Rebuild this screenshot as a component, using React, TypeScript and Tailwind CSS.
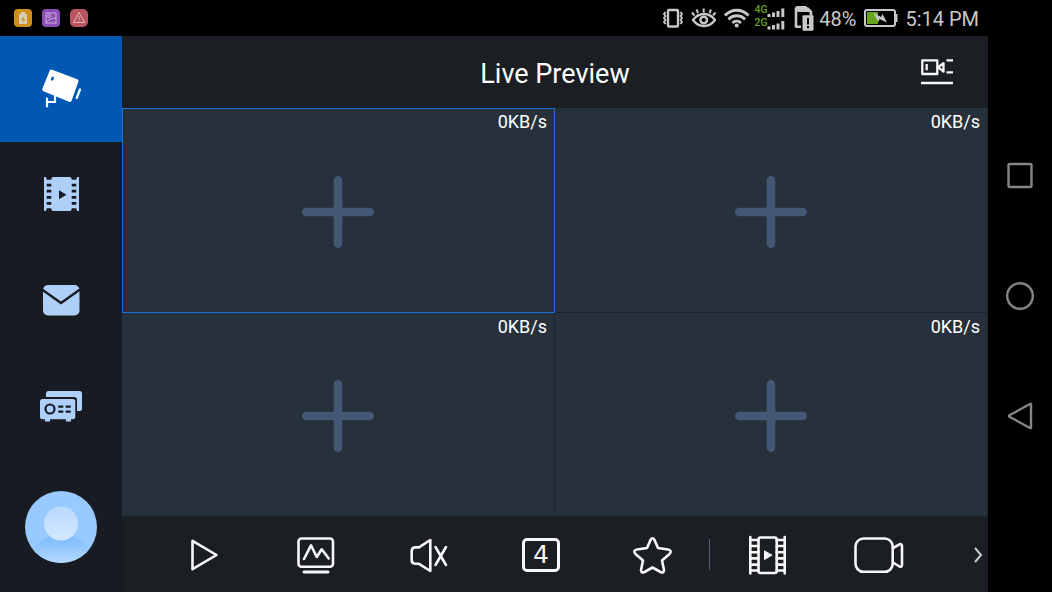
import React from "react";

type IconProps = { children: React.ReactNode };

function Line({ children }: IconProps) {
  return (
    <svg width="48" height="48" viewBox="0 0 48 48" fill="none" stroke="#f7f7f8" strokeWidth="2.6" strokeLinecap="round" strokeLinejoin="round" className="overflow-visible" aria-hidden="true">
      {children}
    </svg>
  );
}

function Solid({ children }: IconProps) {
  return (
    <svg width="48" height="48" viewBox="0 0 48 48" fill="#aecff7" aria-hidden="true">
      {children}
    </svg>
  );
}

function StatusBar() {
  return (
    <div className="flex h-9 shrink-0 items-center justify-between bg-black pl-3.5 pr-[9px]">
      <div className="flex gap-2.5">
        <svg width="18" height="18" viewBox="0 0 18 18" aria-hidden="true">
          <rect width="18" height="18" rx="4" fill="#cf9019" />
          <path d="M7 3h4v2h2v10H5V5h2z" fill="#d8cdb8" />
          <path d="M10 7l-3 3.500h2L8.500 14l3-4H9.500z" fill="#cf9019" />
        </svg>
        <svg width="18" height="18" viewBox="0 0 18 18" fill="none" stroke="#c9aed8" aria-hidden="true">
          <rect width="18" height="18" rx="4" fill="#8a4cb5" stroke="none" />
          <rect x="4" y="4" width="10" height="10" />
          <circle cx="7" cy="7" r="1.500" />
          <path d="M4 14q3-5 10-5" />
        </svg>
        <svg width="18" height="18" viewBox="0 0 18 18" fill="none" stroke="#dcb5b9" aria-hidden="true">
          <rect width="18" height="18" rx="5" fill="#b95460" stroke="none" />
          <path d="M9 3.500L14.700 13.500H3.300zM9 7v3.500M9 11.500v1" strokeLinejoin="round" />
        </svg>
      </div>
      <div className="flex items-center text-[#c8c8c8]">
        <svg width="153" height="30" viewBox="663 3 153 30" fill="none" stroke="#c8c8c8" strokeWidth="2.400" strokeLinejoin="round" aria-hidden="true">
          <rect x="669" y="10" width="10" height="16.500" rx="1" />
          <path d="M666.500 12l-1.500 2 1.500 2-1.500 2 1.500 2-1.500 2 1.500 2M681.500 12l1.500 2-1.500 2 1.500 2-1.500 2 1.500 2-1.500 2" strokeWidth="2" />
          <path d="M694 20c6-8 16-8 22 0c-6 8-16 8-22 0z" />
          <circle cx="704.700" cy="20" r="3.300" />
          <path d="M704.700 8.500v4M697.500 9.500l1.500 3.500M712 9.500L710.500 13M693 12.500l2.500 3M716.500 12.500l-2.500 3" strokeWidth="2" />
          <path d="M726 15.500c6.500-7 17-7 23.500 0M729.500 19.500c4.500-5 12-5 16.500 0M733.500 23c2.500-2.500 6-2.500 8.500 0" strokeWidth="2.800" />
          <circle cx="737.700" cy="25.500" r="2" fill="#c8c8c8" stroke="none" />
          <path d="M770 17v-3M774.500 17v-4.500M779 17v-6M783.800 17V8.500M770 29.500v-3M774.500 29.500V25M779 29.500v-6M783.800 29.500V21" strokeWidth="3" />
          <path d="M802 26.700h-5V11M808 8l4 4v5" strokeWidth="2.600" />
          <path d="M795.700 8l2-2h9.300l6 6h-13l-4.300-1z" fill="#c8c8c8" stroke="none" />
          <rect x="803.500" y="15.300" width="11" height="15.500" rx="1" fill="#c8c8c8" stroke="none" />
          <path d="M809 18v6.500M809 26v2.200" stroke="#000" strokeWidth="2" />
          <g fill="#67a51c" stroke="none" fontFamily="Roboto, sans-serif" fontSize="10.500" fontWeight="500">
            <text x="755.500" y="12.500">4G</text>
            <text x="755.500" y="26">2G</text>
          </g>
        </svg>
        <span className="ml-1 pt-0.5 font-[Roboto,sans-serif] text-xl">48%</span>
        <svg className="ml-2" width="34" height="18" viewBox="0 0 34 18" aria-hidden="true">
          <rect x="1" y="1" width="30" height="16" rx="2" fill="none" stroke="#c8c8c8" strokeWidth="2" />
          <rect x="3" y="3" width="11" height="12" fill="#67a51c" />
          <path d="M32 5h1.500v8H32z" fill="#c8c8c8" />
          <path d="M9 3.500l8 4.500 1.500-3L23 13.500 15.500 10l-1 3z" fill="#c8c8c8" />
        </svg>
        <span className="ml-[7px] pt-0.5 font-[Roboto,sans-serif] text-xl">5:14 PM</span>
      </div>
    </div>
  );
}

function Sidebar() {
  const item = "flex h-[106px] w-full items-center justify-center";
  return (
    <nav className="flex w-[122px] shrink-0 flex-col items-center bg-[#181b22]" aria-label="Sections">
      <button className={item + " bg-[#0058b3]"} aria-label="Live preview">
        <Solid>
          <path d="M14.500 6.500L39.500 16 32.700 35 7.200 24.500z" fill="#fff" stroke="#fff" strokeWidth="4" strokeLinejoin="round" />
          <path d="M16 12l-1.200 3.300" stroke="#0058b3" strokeWidth="2.400" />
          <path d="M10 33.500v8M10 37h8V31M43 24.500L39.700 33" fill="none" stroke="#fff" strokeWidth="2.200" strokeLinecap="round" />
        </Solid>
      </button>
      <button className={item} aria-label="Playback">
        <Solid>
          <path d="M7 6h2v1.500h5.500L15.500 6h18l1 1.500H40V6h2v34h-2v-1.500h-5.500l-1 1.500h-18l-1-1.500H9V40H7z" />
          <path d="M9.700 6h4.600v2.700H9.700zM9.700 12.700h4.600v2.800H9.700zM9.700 18.800h4.600v2.800H9.700zM9.700 24.900h4.600v2.800H9.700zM9.700 31h4.600v2.800H9.700zM9.700 37.300h4.600V40H9.700zM34.700 6h4.600v2.700h-4.600zM34.700 12.700h4.600v2.800h-4.600zM34.700 18.800h4.600v2.800h-4.600zM34.700 24.900h4.600v2.800h-4.600zM34.700 31h4.600v2.800h-4.600zM34.700 37.300h4.600V40h-4.600zM22 19.300l7.500 4.500L22 28.300z" fill="#181b22" />
        </Solid>
      </button>
      <button className={item} aria-label="Messages">
        <Solid>
          <rect x="6" y="8" width="36.500" height="30.500" rx="5" />
          <path d="M5 12.500L24 26l19-13.500" fill="none" stroke="#181b22" strokeWidth="2.300" />
        </Solid>
      </button>
      <button className={item} aria-label="Devices">
        <Solid>
          <rect x="9" y="8" width="36" height="20" rx="2.500" />
          <rect x="1" y="14" width="39" height="26" rx="3" fill="#181b22" />
          <rect x="3" y="16" width="35.300" height="20.300" rx="2.500" />
          <path d="M8 36h5v2.500H8zM29 36h5v2.500h-5z" />
          <circle cx="13" cy="26" r="4.500" fill="none" stroke="#181b22" strokeWidth="2.200" />
          <path d="M21.300 23.700h5M28.700 23.700h5M21.300 28.700h5M28.700 28.700h5" stroke="#181b22" strokeWidth="2.200" />
        </Solid>
      </button>
      <button className="mt-[31px] size-[72px]" aria-label="Profile">
        <svg viewBox="0 0 72 72" aria-hidden="true">
          <defs>
            <linearGradient id="body" x1="0" y1="0" x2="0" y2="1">
              <stop offset="0" stopColor="#77b8fd" />
              <stop offset="1" stopColor="#b4d9ff" />
            </linearGradient>
            <linearGradient id="head" x1="0" y1="0" x2="0" y2="1">
              <stop offset="0" stopColor="#b8daff" />
              <stop offset="1" stopColor="#d3e8ff" />
            </linearGradient>
            <clipPath id="disc"><circle cx="36" cy="36" r="36" /></clipPath>
          </defs>
          <g clipPath="url(#disc)">
            <rect width="72" height="72" fill="#98caff" />
            <path d="M6 60Q20 43 36 43T66 60V72H6z" fill="url(#body)" />
            <circle cx="36" cy="32.500" r="17" fill="url(#head)" />
          </g>
        </svg>
      </button>
    </nav>
  );
}

function Cell({ active }: { active?: boolean }) {
  return (
    <div className={"relative flex border bg-[#27313b] " + (active ? "border-[#1d6fd0]" : "border-l-[#27313b] border-t-[#27313b] border-b-[#1c242b] border-r-[#1c242b]")}>
      <button className="flex flex-1 items-center justify-center pr-px pt-[3px]" aria-label="Add camera">
        <svg width="72" height="72" viewBox="0 0 72 72" stroke="#445876" strokeWidth="8.600" strokeLinecap="round" aria-hidden="true">
          <path d="M36 4.300v63.400M4.300 36h63.400" />
        </svg>
      </button>
      <span className="absolute right-[7px] top-px font-[Roboto,sans-serif] text-lg leading-6 text-white">0KB/s</span>
    </div>
  );
}

function Toolbar() {
  const tool = "flex min-w-0 flex-1 items-center justify-center";
  return (
    <div className="flex h-[75px] shrink-0 items-center bg-[#1b1e23] pl-[26px]">
      <button className={tool} aria-label="Play">
        <Line><path d="M12.500 9.800v28.400L36.500 24z" /></Line>
      </button>
      <button className={tool} aria-label="Stream quality">
        <Line>
          <rect x="6.500" y="7.500" width="34.500" height="28.200" rx="3" />
          <path d="M12 28l7-13.700 5.700 11.700 5-7.700 7 9.200" />
          <path d="M12 41h24" strokeWidth="3" />
        </Line>
      </button>
      <button className={tool} aria-label="Unmute">
        <Line>
          <path d="M25.300 9v31L14 32.800h-4q-3.300-.3-3.300-3.500V20q0-3.300 3.300-3.600h4z" />
          <path d="M30.500 16L41 34M41 16L30.500 34" />
        </Line>
      </button>
      <button className={tool} aria-label="Split into 4 windows">
        <span className="flex h-[34px] w-[38px] items-center justify-center rounded-[5px] border-[3px] border-[#f7f7f8] font-['DejaVu_Sans',sans-serif] text-[25px] leading-none text-[#f7f7f8]">4</span>
      </button>
      <button className={tool} aria-label="Favorites">
        <Line>
          <path d="M18 17L21.500 9Q23.500 5.500 25.500 9l3.500 8 10 1.500Q43.500 19.500 40.500 23l-7.500 6.500 2 9.500Q35 42.500 31.500 41l-8-4.500-8 4.500Q12 42.500 12 39l2-9.500L6.500 23Q3.500 19.500 8 18.500z" />
        </Line>
      </button>
      <span className="h-[31px] w-px bg-[#4b6186]" />
      <button className={tool} aria-label="Playback">
        <Line>
          <path d="M7.300 6v36.500M41.700 6v36.500M7.300 9h8M7.300 15h8M7.300 21.200h8M7.300 27.400h8M7.300 33.600h8M7.300 39.500h8M33.700 9h8M33.700 15h8M33.700 21.200h8M33.700 27.400h8M33.700 33.600h8M33.700 39.500h8" />
          <rect x="15.500" y="6.500" width="18.200" height="35.500" rx="2" />
          <path d="M21.500 20.200v8.300l7.200-4.200z" fill="#f7f7f8" strokeWidth="1" />
        </Line>
      </button>
      <button className={tool} aria-label="Record">
        <Line>
          <rect x="0.500" y="7.500" width="37.200" height="33.300" rx="8" />
          <path d="M38 17l6.500-3.700q2.500-.8 2.500 2V33.500q0 3-2.500 2L38 31.500" />
        </Line>
      </button>
      <button className="flex w-[53px] items-center justify-end pr-[5px]" aria-label="More tools">
        <svg width="9" height="16" viewBox="0 0 9 16" fill="none" stroke="#c9cacc" strokeWidth="2" aria-hidden="true">
          <path d="M1 1l6 7L1 15" />
        </svg>
      </button>
    </div>
  );
}

function SystemNav() {
  return (
    <div className="flex w-16 shrink-0 flex-col items-center justify-center gap-[90px] bg-black text-[#858585]">
      {["Recents", "Home", "Back"].map((name) => (
        <button key={name} aria-label={name}>
          <svg width="30" height="30" viewBox="0 0 30 30" fill="none" stroke="currentColor" strokeWidth="2.400" strokeLinejoin="round" aria-hidden="true">
            {name === "Recents" && <rect x="3.500" y="3" width="23" height="23" rx="1" />}
            {name === "Home" && <circle cx="15" cy="15" r="12.800" />}
            {name === "Back" && <path d="M26 3v24h-1L4 15.500v-1L25 3z" />}
          </svg>
        </button>
      ))}
    </div>
  );
}

export default function App() {
  return (
    <div className="flex min-h-screen bg-black">
      <div className="flex min-w-0 flex-1 flex-col">
        <StatusBar />
        <div className="flex flex-1">
          <Sidebar />
          <main className="flex min-w-0 flex-1 flex-col">
            <header className="grid h-[72px] shrink-0 grid-cols-[1fr_auto_1fr] items-center bg-[#1b1e23] px-[34px]">
              <h1 className="col-start-2 pt-1 font-[Roboto,sans-serif] text-[27px] leading-8 text-white">Live Preview</h1>
              <button className="justify-self-end" aria-label="Camera list">
                <svg width="34" height="28" viewBox="0 0 34 28" fill="none" stroke="#f7f7f8" strokeWidth="2.300" strokeLinejoin="round" aria-hidden="true">
                  <rect x="2.300" y="2.300" width="15" height="13.700" />
                  <path d="M6.700 6v6.300M18 9.200l5.500-4v8.500zM26.500 2.300H33M26.500 14.300H33" />
                  <path d="M1 25h32" strokeWidth="2.500" />
                </svg>
              </button>
            </header>
            <div className="grid flex-1 grid-cols-2 grid-rows-2">
              <Cell active />
              <Cell />
              <Cell />
              <Cell />
            </div>
            <Toolbar />
          </main>
        </div>
      </div>
      <SystemNav />
    </div>
  );
}
